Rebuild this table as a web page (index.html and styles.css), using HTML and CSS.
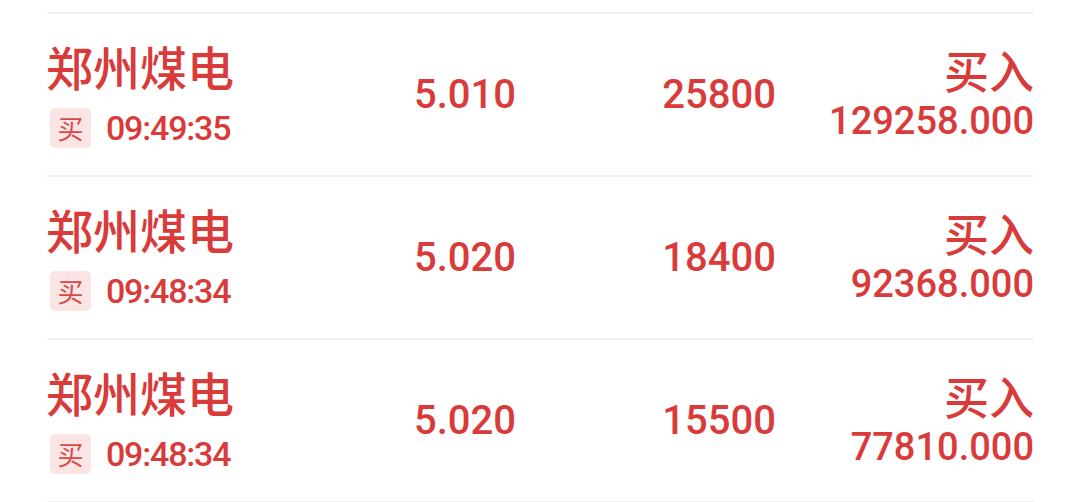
FILE: index.html
```html
<!DOCTYPE html>
<html lang="zh-CN">
<head>
<meta charset="utf-8">
<title>成交明细</title>
<link rel="stylesheet" href="styles.css">
</head>
<body>
<div class="list">
  <div class="row">
    <div class="left">
      <div class="name">郑州煤电</div>
      <div class="sub"><span class="badge">买</span><span class="time">09:49:35</span></div>
    </div>
    <div class="price">5.010</div>
    <div class="qty">25800</div>
    <div class="right">
      <div class="dir">买入</div>
      <div class="amount">129258.000</div>
    </div>
  </div>
  <div class="row">
    <div class="left">
      <div class="name">郑州煤电</div>
      <div class="sub"><span class="badge">买</span><span class="time">09:48:34</span></div>
    </div>
    <div class="price">5.020</div>
    <div class="qty">18400</div>
    <div class="right">
      <div class="dir">买入</div>
      <div class="amount">92368.000</div>
    </div>
  </div>
  <div class="row">
    <div class="left">
      <div class="name">郑州煤电</div>
      <div class="sub"><span class="badge">买</span><span class="time">09:48:34</span></div>
    </div>
    <div class="price">5.020</div>
    <div class="qty">15500</div>
    <div class="right">
      <div class="dir">买入</div>
      <div class="amount">77810.000</div>
    </div>
  </div>
</div>
</body>
</html>
```
FILE: styles.css
```css
html, body {
  margin: 0;
  padding: 0;
  background: #ffffff;
}
body {
  font-family: Roboto, "Noto Sans CJK SC", sans-serif;
  font-weight: 500;
  color: #d83b3a;
}
.list {
  margin: 0 46px 0 47px;
  padding-top: 12px;
}
.row {
  display: grid;
  grid-template-columns: 1fr 120px 260px 258px;
  align-items: center;
  height: 161px;
  border-top: 2px solid #f1f1f1;
}
.row:last-child {
  border-bottom: 2px solid #f1f1f1;
}
.left {
  display: flex;
  flex-direction: column;
  gap: 19px;
  padding-top: 1px;
}
.name {
  font-family: "Noto Sans CJK SC", sans-serif;
  font-size: 47px;
  line-height: 47px;
  margin-left: -1px;
}
.sub {
  display: flex;
  align-items: center;
  gap: 15px;
  padding-left: 3px;
}
.badge {
  width: 41px;
  height: 40px;
  border-radius: 5px;
  background: #fbe4e4;
  color: #d84848;
  font-family: "Noto Sans CJK SC", sans-serif;
  font-size: 26px;
  font-weight: 400;
  line-height: 40px;
  text-align: center;
}
.time {
  font-size: 34px;
  line-height: 40px;
  letter-spacing: -1.2px;
}
.price, .qty {
  font-size: 40px;
  line-height: 40px;
  text-align: right;
}
.right {
  display: flex;
  flex-direction: column;
  align-items: flex-end;
  gap: 10px;
  padding-bottom: 3px;
}
.dir {
  font-family: "Noto Sans CJK SC", sans-serif;
  font-size: 45px;
  line-height: 45px;
}
.amount {
  font-size: 38px;
  line-height: 38px;
}
```
